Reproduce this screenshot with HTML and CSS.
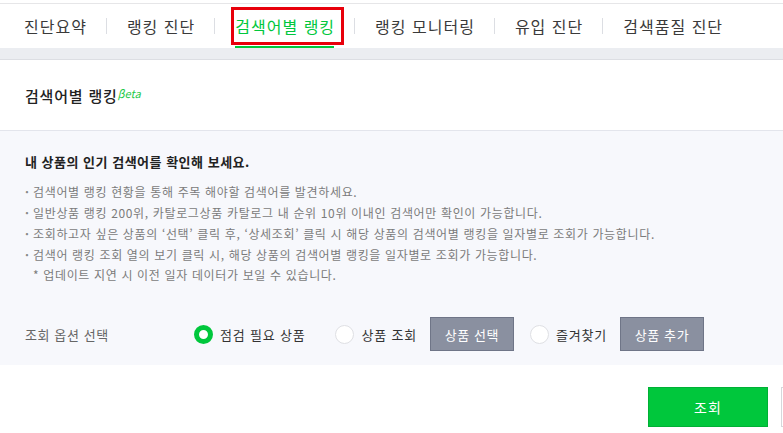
FILE: index.html
```html
<!DOCTYPE html>
<html lang="ko">
<head>
<meta charset="utf-8">
<title>검색어별 랭킹</title>
<link rel="stylesheet" href="styles.css">
</head>
<body>
<nav class="tabs">
  <a class="tab">진단요약</a>
  <span class="sep"></span>
  <a class="tab">랭킹 진단</a>
  <span class="sep"></span>
  <a class="tab active">검색어별 랭킹<span class="mark"></span></a>
  <span class="sep"></span>
  <a class="tab">랭킹 모니터링</a>
  <span class="sep"></span>
  <a class="tab">유입 진단</a>
  <span class="sep"></span>
  <a class="tab">검색품질 진단</a>
</nav>
<div class="band"></div>
<header class="section-head">
  <h2 class="title">검색어별 랭킹<span class="beta">βeta</span></h2>
</header>
<section class="info">
  <p class="info-title">내 상품의 인기 검색어를 확인해 보세요.</p>
  <ul class="bullets">
    <li>검색어별 랭킹 현황을 통해 주목 해야할 검색어를 발견하세요.</li>
    <li>일반상품 랭킹 200위, 카탈로그상품 카탈로그 내 순위 10위 이내인 검색어만 확인이 가능합니다.</li>
    <li>조회하고자 싶은 상품의 ‘선택’ 클릭 후, ‘상세조회’ 클릭 시 해당 상품의 검색어별 랭킹을 일자별로 조회가 가능합니다.</li>
    <li>검색어 랭킹 조회 열의 보기 클릭 시, 해당 상품의 검색어별 랭킹을 일자별로 조회가 가능합니다.</li>
  </ul>
  <p class="note">* 업데이트 지연 시 이전 일자 데이터가 보일 수 있습니다.</p>
  <div class="options">
    <span class="opt-label">조회 옵션 선택</span>
    <label class="choice first"><span class="radio on"></span>점검 필요 상품</label>
    <label class="choice"><span class="radio"></span>상품 조회</label>
    <button class="btn-gray">상품 선택</button>
    <label class="choice"><span class="radio"></span>즐겨찾기</label>
    <button class="btn-gray">상품 추가</button>
  </div>
</section>
<div class="actions">
  <button class="btn-green">조회</button>
  <button class="btn-white" aria-label="초기화"></button>
</div>
</body>
</html>
```
FILE: styles.css
```css
html, body {
  margin: 0;
  padding: 0;
  overflow: hidden;
  background: #fff;
  font-family: "Noto Sans CJK KR", "Noto Sans", sans-serif;
  color: #333;
}
.tabs {
  margin-top: 3px;
  border-top: 1px solid #e6e6e8;
  height: 44px;
  display: flex;
  align-items: center;
  padding-left: 4px;
}
.tab {
  position: relative;
  padding: 0 19px 0 20px;
  font-size: 16px;
  line-height: 44px;
  letter-spacing: 1px;
  color: #3a3a3a;
  white-space: nowrap;
}
.tab.active {
  color: #00c73c;
}
.tab.active::after {
  content: "";
  position: absolute;
  left: 20px;
  right: 20px;
  bottom: 0;
  height: 2px;
  background: #00c73c;
}
.mark {
  position: absolute;
  left: 16px;
  right: 10px;
  top: 3px;
  bottom: 3px;
  border: 3px solid #e8000b;
}
.sep {
  width: 1px;
  height: 16px;
  background: #dcdee3;
}
.band {
  height: 11px;
  background: #ebedf1;
  border-bottom: 1px solid #dcdee3;
}
.section-head {
  height: 70px;
  display: flex;
  align-items: center;
  padding-left: 25px;
  border-bottom: 1px solid #e3e5ec;
}
.title {
  margin: 0;
  font-size: 15px;
  font-weight: 500;
  color: #222;
  letter-spacing: 0.8px;
}
.beta {
  font-size: 11px;
  font-style: italic;
  font-weight: normal;
  letter-spacing: 0;
  color: #1dc948;
  vertical-align: 4px;
  margin-left: 0;
}
.info {
  background: #f7f8fc;
  padding: 20px 0 14px 25px;
}
.info-title {
  margin: 0;
  font-size: 13px;
  font-weight: bold;
  line-height: 22px;
  color: #222;
  letter-spacing: 0.5px;
}
.bullets {
  list-style: none;
  margin: 8px 0 0;
  padding: 0;
}
.bullets li {
  display: flex;
  font-size: 12px;
  line-height: 21px;
  letter-spacing: 0.65px;
  color: #7b7b7b;
  white-space: nowrap;
}
.bullets li::before {
  content: "·";
  width: 8px;
  letter-spacing: 0;
  font-weight: bold;
  color: #888;
}
.note {
  margin: 0;
  padding-left: 8px;
  font-size: 12px;
  line-height: 20px;
  letter-spacing: 0.65px;
  color: #7b7b7b;
}
.options {
  margin-top: 32px;
  display: flex;
  align-items: center;
  height: 34px;
}
.opt-label {
  width: 169px;
  font-size: 13px;
  letter-spacing: 0.6px;
  color: #666;
}
.choice {
  display: flex;
  align-items: center;
  gap: 7px;
  font-size: 13px;
  letter-spacing: 0.8px;
  color: #333;
  margin-right: 13px;
}
.choice.first {
  margin-right: 30px;
}
.radio {
  box-sizing: border-box;
  width: 19px;
  height: 19px;
  border-radius: 50%;
  background: #fff;
  border: 1px solid #dfe0e4;
}
.radio.on {
  border: 5px solid #00c73c;
}
.btn-gray {
  box-sizing: border-box;
  width: 84px;
  height: 34px;
  margin-right: 16px;
  background: #8a90a0;
  border: 1px solid #6f7587;
  color: #fff;
  font-family: inherit;
  font-size: 13px;
  letter-spacing: 0.6px;
  padding: 0;
}
.actions {
  display: flex;
  gap: 13px;
  padding: 22px 0 0 648px;
}
.btn-green {
  flex: none;
  box-sizing: border-box;
  width: 120px;
  height: 40px;
  background: #00c73c;
  border: 1px solid #00b035;
  color: #fff;
  font-family: inherit;
  font-size: 14px;
  letter-spacing: 1px;
  padding: 0;
}
.btn-white {
  flex: none;
  box-sizing: border-box;
  width: 120px;
  height: 40px;
  background: #fff;
  border: 1px solid #d6d7db;
  padding: 0;
}
```
